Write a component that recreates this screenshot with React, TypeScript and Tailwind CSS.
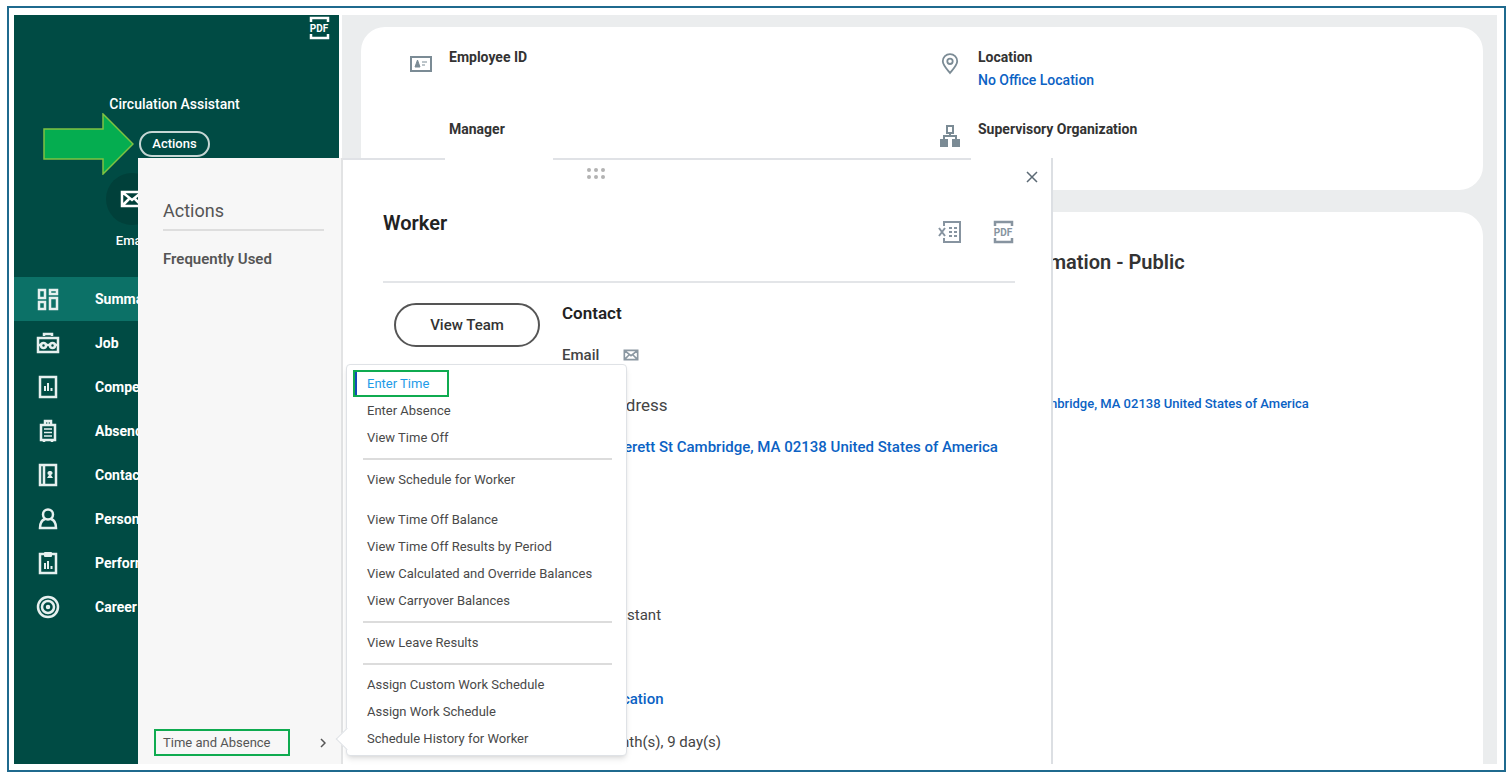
import type { ReactNode } from "react";

type NavItem = { label: string; icon: ReactNode };

const NAV_ITEMS: NavItem[] = [
  {
    label: "Summary",
    icon: (
      <>
        <rect x="3" y="3" width="6" height="8" />
        <rect x="3" y="15" width="6" height="7" />
        <rect x="14" y="3" width="7" height="4" />
        <rect x="14" y="11" width="7" height="11" />
      </>
    ),
  },
  {
    label: "Job",
    icon: (
      <>
        <path d="M8 5V3h8v2M2 7h20v14H2zM2 14h3M10 14h4M19 14h3" />
        <circle cx="7.5" cy="14.5" r="2.5" />
        <circle cx="16.5" cy="14.5" r="2.5" />
      </>
    ),
  },
  {
    label: "Compensation",
    icon: (
      <>
        <rect x="4" y="2" width="16" height="20" />
        <path d="M9 11v5M12 8v8M15.5 13v3" strokeWidth={2} />
      </>
    ),
  },
  {
    label: "Absence",
    icon: (
      <>
        <path d="M9 5V2h6v3M5 6h14v15H5zM8 21v2M16 21v2" />
        <path d="M12 2v3M8 10h8M8 13.5h8M8 17h8" strokeWidth={1.5} />
      </>
    ),
  },
  {
    label: "Contact",
    icon: (
      <>
        <path d="M4 2h16v20H4zM8 2v20" />
        <path d="M14 8a2 2 0 0 1 1 4l2 3h-6l2-3a2 2 0 0 1 1-4z" fill="currentColor" stroke="none" />
      </>
    ),
  },
  {
    label: "Personal",
    icon: (
      <>
        <circle cx="12" cy="7.5" r="5" />
        <path d="M9 12c-3 1-5 4-5 9h16c0-5-2-8-5-9" />
      </>
    ),
  },
  {
    label: "Performance",
    icon: (
      <>
        <rect x="4" y="3" width="16" height="19" />
        <rect x="8" y="1" width="8" height="5" rx="1" fill="currentColor" stroke="none" />
        <path d="M9 12v6M12 10v8M15.5 15v3" strokeWidth={2} />
      </>
    ),
  },
  {
    label: "Career",
    icon: (
      <>
        <circle cx="12" cy="12" r="10" />
        <circle cx="12" cy="12" r="6" />
        <circle cx="12" cy="12" r="1" fill="currentColor" />
      </>
    ),
  },
];

// Each inner list is a block of the flyout; "rule" draws a line above it.
const MENU_GROUPS = [
  { rule: false, items: ["Enter Time", "Enter Absence", "View Time Off"] },
  { rule: true, items: ["View Schedule for Worker"] },
  {
    rule: false,
    items: [
      "View Time Off Balance",
      "View Time Off Results by Period",
      "View Calculated and Override Balances",
      "View Carryover Balances",
    ],
  },
  { rule: true, items: ["View Leave Results"] },
  {
    rule: true,
    items: ["Assign Custom Work Schedule", "Assign Work Schedule", "Schedule History for Worker"],
  },
];

function PdfIcon({ className }: { className?: string }) {
  return (
    <svg viewBox="0 0 24 24" className={className} fill="none" stroke="currentColor" strokeWidth={2.5} aria-hidden="true">
      <path d="M4 6V2h17v4M4 18v4h17v-4" />
      <text
        x="12"
        y="15.5"
        textAnchor="middle"
        fontSize="10"
        fontWeight="700"
        fontFamily="Roboto, sans-serif"
        fill="currentColor"
        stroke="none"
      >
        PDF
      </text>
    </svg>
  );
}

function ExcelIcon({ className }: { className?: string }) {
  return (
    <svg viewBox="0 0 24 24" className={className} fill="none" stroke="currentColor" strokeWidth={2} aria-hidden="true">
      <path d="M6 6V2h16v20H6v-4" />
      <path d="M1 8l6 8M7 8l-6 8" />
      <path d="M11 8h3M16 8h3M11 12h3M16 12h3M11 16h3M16 16h3" />
    </svg>
  );
}

function MailIcon({ className }: { className?: string }) {
  return (
    <svg viewBox="0 0 24 18" className={className} fill="none" stroke="currentColor" strokeWidth={2.5} aria-hidden="true">
      <path d="M2 2h20v14H2zM2 2l10 8 10-8M2 16l7-7M22 16l-7-7" />
    </svg>
  );
}

function Sidebar() {
  return (
    <aside className="flex w-[325px] shrink-0 flex-col bg-[#004b44] text-[13px] font-medium text-white">
      <div className="flex h-[26px] justify-end pr-2">
        <button type="button" aria-label="Export to PDF">
          <PdfIcon className="size-6" />
        </button>
      </div>
      <div className="flex flex-col items-center pr-1 pt-[53px]">
        <p className="text-sm leading-5">Circulation Assistant</p>
        <button type="button" className="mt-[17px] h-[26px] rounded-full border-2 border-[#c5d6d4] px-[11px] leading-5">
          Actions
        </button>
      </div>
      <div className="ml-[92px] mt-4 flex w-[52px] flex-col items-center">
        <button type="button" aria-label="Send email" className="grid size-[52px] place-items-center rounded-full bg-[#00403a]">
          <MailIcon className="h-[18px] w-6" />
        </button>
        <span className="mt-[6px] leading-5">Email</span>
      </div>
      <nav className="mt-[26px] flex flex-col text-sm">
        {NAV_ITEMS.map((item, i) => (
          <a
            key={item.label}
            href="#"
            className={`flex h-11 items-center gap-[35px] pl-[22px] font-bold ${i === 0 ? "bg-[#0c7167]" : ""}`}
          >
            <svg viewBox="0 0 24 24" className="size-6 text-[#e6f0ef]" fill="none" stroke="currentColor" strokeWidth={2.5} aria-hidden="true">
              {item.icon}
            </svg>
            {item.label}
          </a>
        ))}
      </nav>
    </aside>
  );
}

function Fact({ icon, label, value }: { icon?: ReactNode; label: string; value?: string }) {
  return (
    <div className="flex h-[72px] gap-4">
      <span className="mt-[5px] grid size-6 place-items-center text-[#7b8b95]">{icon}</span>
      <div>
        <h3 className="text-sm font-bold leading-5 text-[#333]">{label}</h3>
        {value && (
          <a href="#" className="mt-[3px] block text-sm font-medium leading-5 text-[#0b62c4]">
            {value}
          </a>
        )}
      </div>
    </div>
  );
}

function Profile() {
  return (
    <main className="ml-[3px] flex min-w-0 flex-1 flex-col bg-[#ebedee] pl-[19px] pr-[14px] pt-3">
      <section className="grid h-[163px] grid-cols-2 content-start rounded-3xl bg-white pl-12 pr-4 pt-5">
        <Fact
          label="Employee ID"
          icon={
            <svg viewBox="0 0 22 16" className="h-4 w-[22px]" fill="none" stroke="currentColor" strokeWidth={2} aria-hidden="true">
              <rect x="1" y="1" width="20" height="14" />
              <path d="M7.5 4l2.500 7h-5zM12 6h5M12 9h3" fill="currentColor" strokeWidth={1} />
            </svg>
          }
        />
        <Fact
          label="Location"
          value="No Office Location"
          icon={
            <svg viewBox="0 0 20 24" className="h-[22px] w-[18px]" fill="none" stroke="currentColor" strokeWidth={2} aria-hidden="true">
              <path d="M10 22C5 16 2 13 2 9a8 8 0 0 1 16 0c0 4-3 7-8 13z" />
              <circle cx="10" cy="9" r="3" />
            </svg>
          }
        />
        <Fact label="Manager" />
        <Fact
          label="Supervisory Organization"
          icon={
            <svg viewBox="0 0 22 24" className="h-6 w-[22px]" fill="none" stroke="currentColor" strokeWidth={2} aria-hidden="true">
              <rect x="8" y="2" width="6" height="7" />
              <path d="M11 9v3M5 16v-4h12v4" />
              <path d="M1 15h8v8H1zM13 15h8v8h-8z" fill="currentColor" stroke="none" />
            </svg>
          }
        />
      </section>
      <section className="mt-[22px] flex-1 rounded-t-3xl bg-white pl-[570px] pt-9">
        <h2 className="text-xl font-semibold leading-7 text-[#333]">Contact Information - Public</h2>
        <a href="#" className="mt-[118px] block text-[13px] font-medium leading-5 text-[#0b62c4]">
          13500 Everett St Cambridge, MA 02138 United States of America
        </a>
      </section>
    </main>
  );
}

function TimeMenu() {
  return (
    <div
      role="menu"
      aria-label="Time and Absence"
      className="absolute bottom-2 left-[208px] z-10 w-[281px] rounded border border-[#dfe2e6] bg-white pb-[3px] pl-4 pr-[14px] pt-[5px] text-[13px] text-[#494949] shadow-md"
    >
      <span className="absolute -left-2 bottom-2 size-4 rotate-45 border-b border-l border-[#dfe2e6] bg-white" />
      {MENU_GROUPS.map((group, g) => (
        <div key={group.items[0]} className={g === 2 ? "pt-[13px]" : ""}>
          {group.rule && <hr className="mb-[6px] mt-[7px] border-t-2 border-[#dcdcdc]" />}
          {group.items.map((item) => {
            const active = item === "Enter Time";
            return (
              <button
                key={item}
                type="button"
                role="menuitem"
                className={`flex h-[27px] items-center ${
                  active
                    ? "-ml-[10px] w-24 border-2 border-[#0fab50] pl-3 text-[#1e9be8] shadow-[inset_2px_0_0_#1549b8]"
                    : "w-full pl-1"
                }`}
              >
                {item}
              </button>
            );
          })}
        </div>
      ))}
    </div>
  );
}

function WorkerPanel() {
  return (
    <section className="relative flex min-w-0 flex-1 flex-col border-r-2 border-[#dcdfe3] bg-white pl-10 pr-9 text-[#444]">
      {/* top edge, broken where it passes under the two labels behind it */}
      <div className="-ml-10 -mr-9 flex h-[2px]">
        <span className="w-[102px] bg-[#e0e2e6]" />
        <span className="w-[108px]" />
        <span className="flex-1 bg-[#e0e2e6]" />
        <span className="w-20" />
      </div>
      <button type="button" aria-label="Close" className="absolute right-3 top-3 p-px text-[#5c6a75]">
        <svg viewBox="0 0 12 12" className="size-3" fill="none" stroke="currentColor" strokeWidth={1.5} aria-hidden="true">
          <path d="M1 1l10 10M11 1L1 11" />
        </svg>
      </button>
      <div className="flex items-start justify-between border-b-2 border-[#e3e5e8] pb-[37px] pt-[49px]">
        <h2 className="text-xl font-semibold leading-7 text-[#222]">Worker</h2>
        <div className="mt-[11px] flex gap-[29px] text-[#8794a0]">
          <button type="button" aria-label="Export to Excel">
            <ExcelIcon className="size-6" />
          </button>
          <button type="button" aria-label="Export to PDF">
            <PdfIcon className="size-6" />
          </button>
        </div>
      </div>
      <div className="flex items-start gap-[22px] pl-[11px] pt-5 text-[15px] leading-5">
        <button type="button" className="h-11 w-[146px] shrink-0 rounded-full border-2 border-[#555] font-medium text-[#333]">
          View Team
        </button>
        <div className="whitespace-nowrap">
          <h3 className="text-[17px] font-semibold leading-5 text-[#222]">Contact</h3>
          <p className="mt-[22px] flex items-center gap-6 font-medium">
            Email
            <MailIcon className="h-3 w-4 text-[#8b98a2]" />
          </p>
          <h4 className="mt-[30px] text-[17px] leading-5">Work Address</h4>
          <a href="#" className="mt-[22px] block font-medium text-[#0b62c4]">
            13500 Everett St Cambridge, MA 02138 United States of America
          </a>
          <p className="mt-[148px]">Staff Assistant</p>
          <a href="#" className="mt-16 block font-medium text-[#0b62c4]">
            Office Location
          </a>
          <p className="mt-[23px]">1 y, 1 month(s), 9 day(s)</p>
        </div>
      </div>
    </section>
  );
}

function ActionsDialog() {
  return (
    <div role="dialog" aria-label="Actions" className="absolute bottom-0 left-[124px] right-[444px] top-[143px] flex">
      <div className="flex w-[205px] flex-col border-r-2 border-[#e2e3e4] bg-[#f7f7f7] pl-4 pr-[17px] text-[#555]">
        <h2 className="ml-[9px] mt-[39px] border-b-2 border-[#dedede] pb-1 text-lg leading-7">Actions</h2>
        <a href="#" className="ml-[9px] mt-4 text-[15px] font-semibold leading-6">
          Frequently Used
        </a>
        <div className="mb-2 mt-auto flex items-center justify-between">
          <button type="button" aria-haspopup="menu" className="h-[27px] w-[136px] border-2 border-[#0fab50] pl-[7px] text-left text-[13px]">
            Time and Absence
          </button>
          <svg viewBox="0 0 6 10" className="-mr-0.5 h-[10px] w-[6px]" fill="none" stroke="currentColor" strokeWidth={1.5} aria-hidden="true">
            <path d="M1 1l4 4-4 4" />
          </svg>
        </div>
      </div>
      <WorkerPanel />
      <svg viewBox="0 0 18 11" className="absolute left-1/2 top-[10px] h-[11px] w-[18px] -translate-x-1/2" fill="#b3b3b3" aria-hidden="true">
        {[2, 9, 16].map((x) => (
          <g key={x}>
            <circle cx={x} cy="2" r="2" />
            <circle cx={x} cy="9" r="2" />
          </g>
        ))}
      </svg>
      <TimeMenu />
    </div>
  );
}

export default function App() {
  return (
    <div className="flex min-h-screen bg-white pb-[5px] pl-[7px] pr-[6px] pt-[6px] font-[Roboto,sans-serif]">
      <div className="flex flex-1 border-2 border-[#1f6a8e] pb-[6px] pl-[5px] pr-[7px] pt-[7px]">
        <div className="relative flex min-w-0 flex-1">
          <Sidebar />
          <Profile />
          <ActionsDialog />
          <svg viewBox="0 0 91 62" className="absolute left-[29px] top-[98px] h-[62px] w-[91px]" aria-hidden="true">
            <path d="M1 16h59V1l30 30-30 30V46H1z" fill="#05ad50" stroke="#7fc241" strokeWidth={1.5} />
          </svg>
        </div>
      </div>
    </div>
  );
}
